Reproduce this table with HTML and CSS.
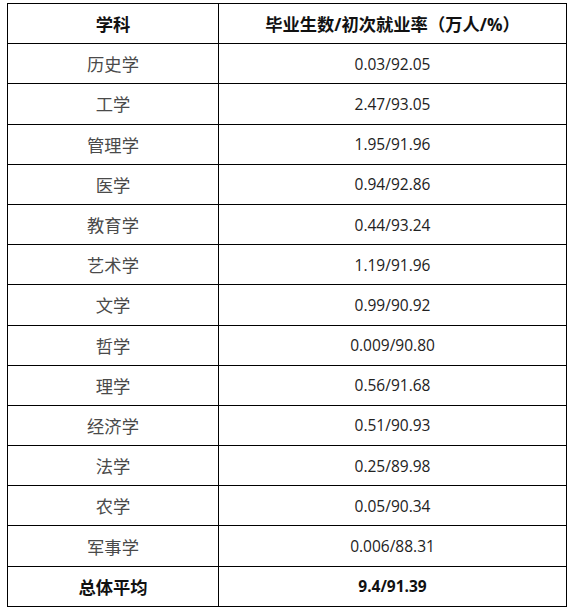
FILE: index.html
```html
<!DOCTYPE html>
<html lang="zh-CN">
<head>
<meta charset="utf-8">
<title>学科就业率</title>
<link rel="stylesheet" href="styles.css">
</head>
<body>
<table class="grid">
  <colgroup><col class="c1"><col class="c2"></colgroup>
  <thead>
    <tr class="head"><th class="name">学科</th><th class="hval">毕业生数/初次就业率（万人/%）</th></tr>
  </thead>
  <tbody>
    <tr><td class="name">历史学</td><td class="val">0.03/92.05</td></tr>
    <tr><td class="name">工学</td><td class="val">2.47/93.05</td></tr>
    <tr><td class="name">管理学</td><td class="val">1.95/91.96</td></tr>
    <tr><td class="name">医学</td><td class="val">0.94/92.86</td></tr>
    <tr><td class="name">教育学</td><td class="val">0.44/93.24</td></tr>
    <tr><td class="name">艺术学</td><td class="val">1.19/91.96</td></tr>
    <tr><td class="name">文学</td><td class="val">0.99/90.92</td></tr>
    <tr><td class="name">哲学</td><td class="val">0.009/90.80</td></tr>
    <tr><td class="name">理学</td><td class="val">0.56/91.68</td></tr>
    <tr><td class="name">经济学</td><td class="val">0.51/90.93</td></tr>
    <tr><td class="name">法学</td><td class="val">0.25/89.98</td></tr>
    <tr><td class="name">农学</td><td class="val">0.05/90.34</td></tr>
    <tr><td class="name">军事学</td><td class="val">0.006/88.31</td></tr>
    <tr class="total"><td class="name">总体平均</td><td class="val">9.4/91.39</td></tr>
  </tbody>
</table>
</body>
</html>
```

FILE: styles.css
```css
html, body {
  margin: 0;
  padding: 0;
  background: #ffffff;
}

.grid {
  border-collapse: collapse;
  width: 560px;
  margin: 3px 0 0 7px;
  table-layout: fixed;
}

.c1 { width: 211px; }

.grid tr {
  height: 40.2px;
}

.grid th,
.grid td {
  border: 1px solid #000;
  text-align: center;
  vertical-align: middle;
  padding: 0;
}

.name {
  font-family: "Noto Sans CJK SC", sans-serif;
  font-size: 17.3px;
  font-weight: 400;
  color: #4a4a4a;
}

.val {
  font-family: "Open Sans", "Noto Sans CJK SC", sans-serif;
  font-size: 15.5px;
  color: #222;
}

.head th {
  font-weight: 700;
  color: #111;
}

.hval {
  font-family: "Open Sans", "Noto Sans CJK SC", sans-serif;
  font-size: 17.3px;
}

.total td {
  font-weight: 700;
  color: #111;
}
```
